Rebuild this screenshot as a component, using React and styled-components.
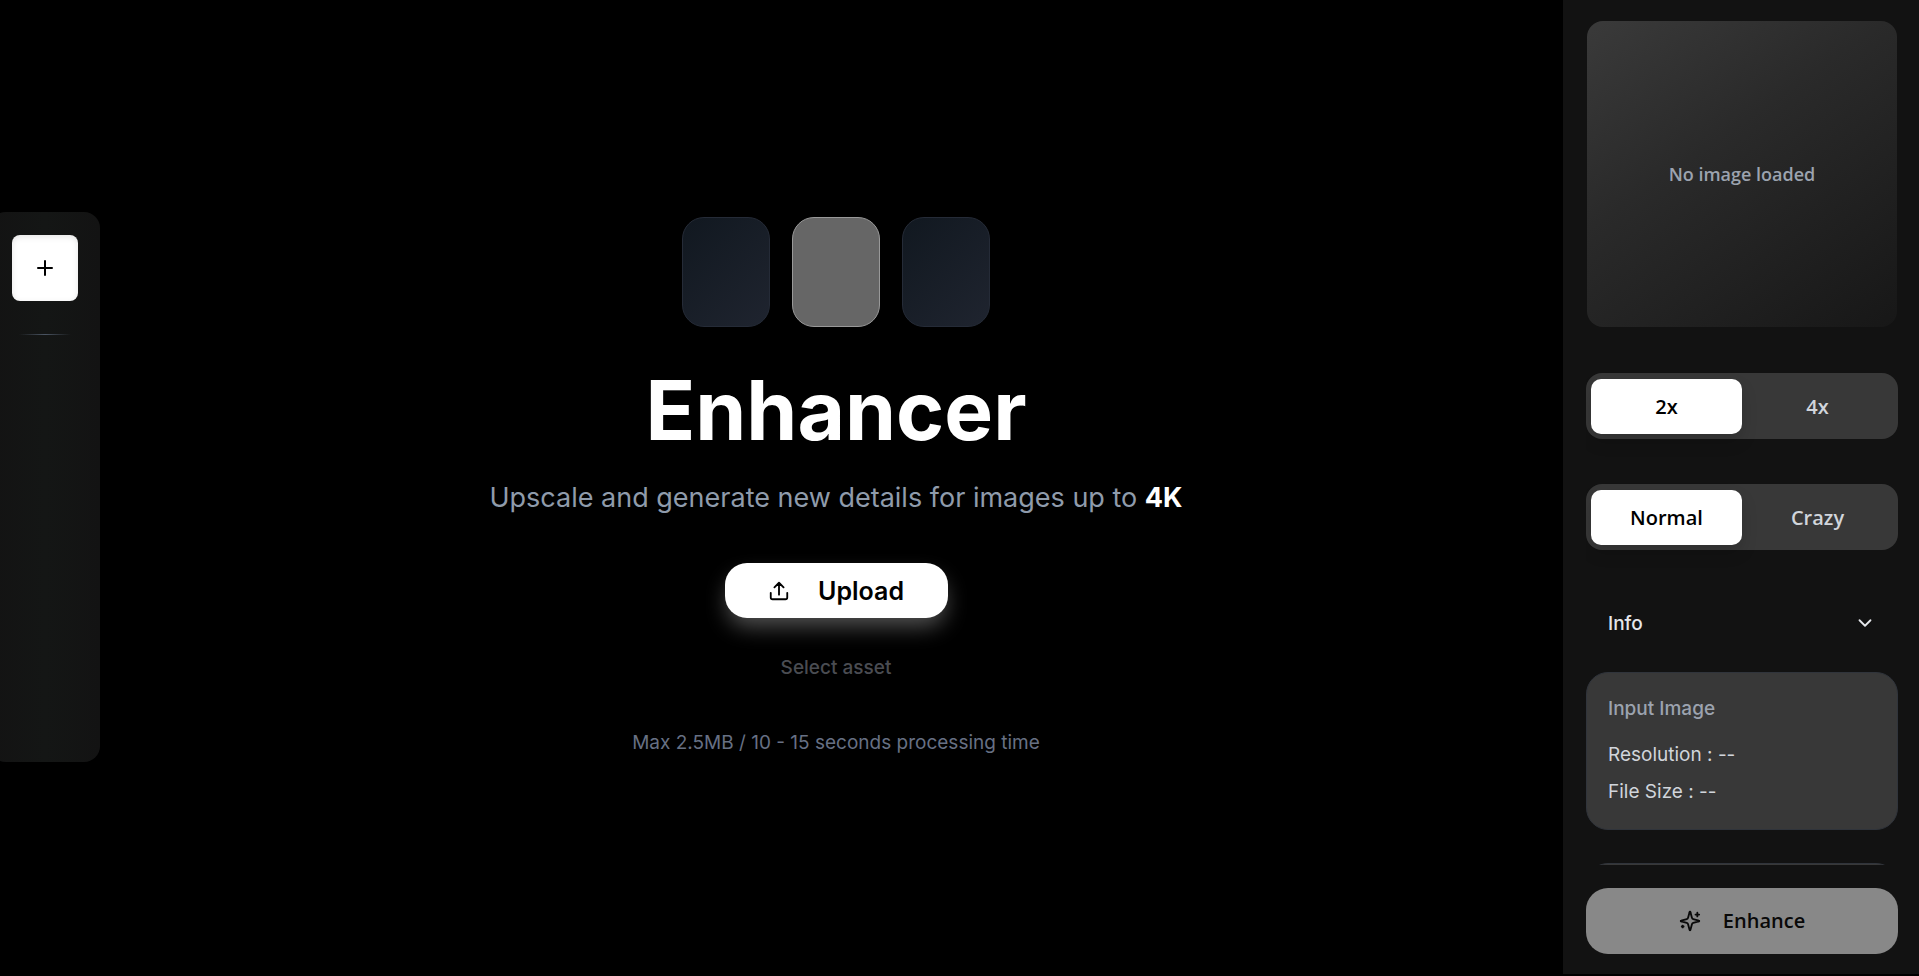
import React, { useState } from "react";
import styled, { createGlobalStyle, css } from "styled-components";

const display = `Inter, "Open Sans", sans-serif`;
const ui = `"Open Sans", "Noto Sans", sans-serif`;

const GlobalStyle = createGlobalStyle`
  *, *::before, *::after { box-sizing: border-box; }
  body { margin: 0; background: #000; color: #fff; font-family: ${display}; }
  button { font: inherit; border: 0; padding: 0; background: none; cursor: pointer; }
  h1, h2, p { margin: 0; }
`;

const Page = styled.div`
  display: flex;
  height: 100vh;
  padding-bottom: 2px;
  overflow: hidden;
`;

const AssetRail = styled.nav`
  flex: none;
  align-self: center;
  display: flex;
  flex-direction: column;
  align-items: center;
  gap: 33px;
  width: 110px;
  height: 550px;
  margin: 0 9px 0 -10px;
  padding: 23px 10px;
  border-radius: 16px;
  background: linear-gradient(90deg, #131313, #141615 50%, #131313);
`;

const AddButton = styled.button`
  display: grid;
  place-items: center;
  width: 66px;
  height: 66px;
  border-radius: 8px;
  background: #fff;
  color: #000;
  box-shadow: inset 0 2px 6px rgba(0, 0, 0, 0.1);
`;

const RailDivider = styled.div`
  width: 52px;
  height: 1px;
  background: linear-gradient(90deg, transparent, #4b5563, transparent);
`;

const Stage = styled.main`
  flex: 1;
  min-width: 0;
  display: flex;
  flex-direction: column;
  align-items: center;
  justify-content: center;
`;

const Tiles = styled.div`
  display: flex;
  gap: 22px;
`;

const Tile = styled.div`
  width: 88px;
  height: 110px;
  border: 1px solid ${(p) => (p.$active ? "#999" : "#252b37")};
  border-radius: 22px;
  background: ${(p) => (p.$active ? "#666" : "linear-gradient(135deg, #111820, #1f242f)")};
`;

const Title = styled.h1`
  margin-top: 43px;
  font-size: 82px;
  line-height: 82px;
  font-weight: 700;
`;

const Lead = styled.p`
  margin-top: 28px;
  font-size: 27px;
  line-height: 36px;
  color: #8f9bab;

  strong { color: #fff; font-weight: 700; }
`;

const UploadButton = styled.button`
  display: flex;
  align-items: center;
  justify-content: center;
  gap: 28px;
  width: 223px;
  height: 55px;
  margin-top: 47px;
  border-radius: 22px;
  background: #fff;
  color: #000;
  font-size: 25px;
  font-weight: 600;
  box-shadow: 0 11px 22px -3px rgba(255, 255, 255, 0.33);
`;

const SelectAsset = styled.button`
  margin-top: 36px;
  color: #4a4c52;
  font-size: 19px;
  line-height: 28px;
  font-weight: 500;
`;

const Limits = styled.p`
  margin-top: 47px;
  color: #677084;
  font-size: 19px;
  line-height: 28px;
`;

const Sidebar = styled.aside`
  flex: none;
  display: flex;
  flex-direction: column;
  width: 356px;
  padding: 21px 21px 20px 23px;
  background: #121212;
`;

const Settings = styled.div`
  flex: 1;
  min-height: 0;
  overflow: hidden;
`;

const Preview = styled.div`
  display: grid;
  place-items: center;
  height: 306px;
  margin: 0 1px;
  border-radius: 16px;
  background: linear-gradient(145deg, #3a3a3a, #2a2a2a 40%, #171717);
  color: #9ca3af;
  font: 600 18px/28px ${ui};
`;

const Segments = styled.div`
  display: flex;
  height: 66px;
  margin-top: ${(p) => p.$gap}px;
  padding: 6px 5px 5px;
  border-radius: 16px;
  background: #383838;
`;

const Segment = styled.button`
  flex: 1;
  border-radius: 10px;
  color: #d1d5db;
  font: 600 20px/28px ${ui};
  ${(p) => p.$active && css`
    background: #fff;
    color: #000;
    box-shadow: 0 8px 16px rgba(0, 0, 0, 0.15);
  `}
`;

const InfoToggle = styled.button`
  display: flex;
  align-items: center;
  justify-content: space-between;
  width: 100%;
  height: 66px;
  margin-top: 40px;
  padding: 0 22px;
  color: #e5e7eb;
  font-size: 19px;
  font-weight: 500;
`;

const Card = styled.section`
  min-height: 158px;
  margin-top: ${(p) => p.$gap}px;
  padding: 21px;
  border: 1px solid #30343b;
  border-radius: 22px;
  background: #383838;
  font-size: 19px;
`;

const CardTitle = styled.h2`
  margin-bottom: 16px;
  color: #9ca3af;
  font-size: 19px;
  line-height: 30px;
  font-weight: 500;
`;

const CardRow = styled.p`
  color: #d1d5db;
  line-height: 30px;

  & + & { margin-top: 7px; }
`;

const EnhanceButton = styled.button`
  flex: none;
  display: flex;
  align-items: center;
  justify-content: center;
  gap: 22px;
  height: 66px;
  margin-top: 23px;
  border-radius: 22px;
  background: #888;
  color: #090909;
  font: 600 20px/28px ${ui};
`;

const Icon = ({ size, stroke = 2, children }) => (
  <svg width={size} height={size} viewBox="0 0 24 24" fill="none" stroke="currentColor"
    strokeWidth={stroke} strokeLinecap="round" strokeLinejoin="round" aria-hidden="true">
    {children}
  </svg>
);

function SegmentedControl({ options, label, gap }) {
  const [value, setValue] = useState(options[0]);
  return (
    <Segments role="group" aria-label={label} $gap={gap}>
      {options.map((o) => (
        <Segment key={o} type="button" $active={o === value} aria-pressed={o === value} onClick={() => setValue(o)}>
          {o}
        </Segment>
      ))}
    </Segments>
  );
}

export default function App() {
  const [open, setOpen] = useState(true);
  return (
    <Page>
      <GlobalStyle />
      <AssetRail aria-label="Assets">
        <AddButton type="button" aria-label="Add asset">
          <Icon size={24}><path d="M5 12h14M12 5v14" /></Icon>
        </AddButton>
        <RailDivider />
      </AssetRail>

      <Stage>
        <Tiles>
          <Tile />
          <Tile $active />
          <Tile />
        </Tiles>
        <Title>Enhancer</Title>
        <Lead>Upscale and generate new details for images up to <strong>4K</strong></Lead>
        <UploadButton type="button">
          <Icon size={22}>
            <path d="M12 16V3M7 8l5-5 5 5M3 14v5a2 2 0 0 0 2 2h14a2 2 0 0 0 2-2v-5" />
          </Icon>
          Upload
        </UploadButton>
        <SelectAsset type="button">Select asset</SelectAsset>
        <Limits>Max 2.5MB / 10 - 15 seconds processing time</Limits>
      </Stage>

      <Sidebar>
        <Settings>
          <Preview>No image loaded</Preview>
          <SegmentedControl label="Scale" options={["2x", "4x"]} gap={46} />
          <SegmentedControl label="Mode" options={["Normal", "Crazy"]} gap={45} />
          <InfoToggle type="button" aria-expanded={open} onClick={() => setOpen(!open)}>
            Info
            <Icon size={22}><path d="m6 9 6 6 6-6" /></Icon>
          </InfoToggle>
          {open && (
            <>
              <Card $gap={16}>
                <CardTitle>Input Image</CardTitle>
                <CardRow>Resolution : --</CardRow>
                <CardRow>File Size : --</CardRow>
              </Card>
              <Card $gap={33} />
            </>
          )}
        </Settings>
        <EnhanceButton type="button">
          <Icon size={22}>
            <path d="M9.9 15.5A2 2 0 0 0 8.500 14.100L2.400 12.500a.5.5 0 0 1 0-1L8.500 9.900A2 2 0 0 0 9.900 8.500l1.600-6.100a.5.5 0 0 1 1 0l1.600 6.100A2 2 0 0 0 15.500 9.900l6.100 1.600a.5.5 0 0 1 0 1l-6.100 1.600a2 2 0 0 0-1.400 1.400l-1.600 6.100a.5.5 0 0 1-1 0zM20 3v4M22 5h-4M4 17v2M5 18H3" />
          </Icon>
          Enhance
        </EnhanceButton>
      </Sidebar>
    </Page>
  );
}
